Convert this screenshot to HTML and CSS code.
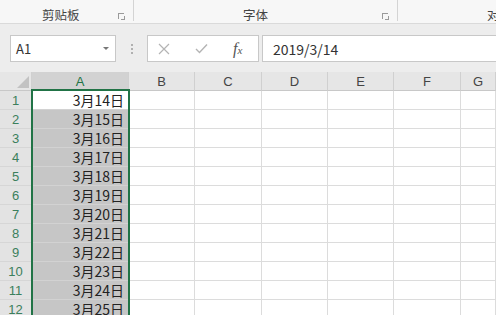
FILE: index.html
```html
<!DOCTYPE html>
<html>

<head>
    <meta charset="utf-8">
    <link rel="stylesheet" href="styles.css">
</head>

<body>

    <div class="ribbon">
        <div class="group group-clip">
            <span class="group-label">剪贴板</span>
            <span class="launcher"></span>
        </div>
        <div class="group group-font">
            <span class="group-label">字体</span>
            <span class="launcher"></span>
        </div>
        <div class="group group-align">
            <span class="group-label">对齐方式</span>
        </div>
    </div>

    <div class="formula-bar">
        <div class="name-box">
            <span>A1</span>
            <span class="caret"></span>
        </div>
        <div class="grip"><i></i><i></i><i></i></div>
        <div class="fx-buttons">
            <svg width="12" height="12" viewBox="0 0 12 12">
                <path d="M1 1 L11 11 M11 1 L1 11" stroke="#b4b4b4" stroke-width="1.2" fill="none" />
            </svg>
            <svg width="13" height="11" viewBox="0 0 13 11">
                <path d="M1 6 L4.5 9.5 L12 1.5" stroke="#b4b4b4" stroke-width="1.4" fill="none" />
            </svg>
            <span class="fx">f<sub>x</sub></span>
        </div>
        <div class="formula-input">2019/3/14</div>
    </div>

    <div class="sheet">
        <div class="grid">
            <div class="corner"><span class="corner-mark"></span></div>
            <div class="col-head selected">A</div>
            <div class="col-head">B</div>
            <div class="col-head">C</div>
            <div class="col-head">D</div>
            <div class="col-head">E</div>
            <div class="col-head">F</div>
            <div class="col-head">G</div>

            <div class="row-head">1</div><div class="cell a active">3月14日</div><div class="cell"></div><div class="cell"></div><div class="cell"></div><div class="cell"></div><div class="cell"></div><div class="cell"></div>
            <div class="row-head">2</div><div class="cell a">3月15日</div><div class="cell"></div><div class="cell"></div><div class="cell"></div><div class="cell"></div><div class="cell"></div><div class="cell"></div>
            <div class="row-head">3</div><div class="cell a">3月16日</div><div class="cell"></div><div class="cell"></div><div class="cell"></div><div class="cell"></div><div class="cell"></div><div class="cell"></div>
            <div class="row-head">4</div><div class="cell a">3月17日</div><div class="cell"></div><div class="cell"></div><div class="cell"></div><div class="cell"></div><div class="cell"></div><div class="cell"></div>
            <div class="row-head">5</div><div class="cell a">3月18日</div><div class="cell"></div><div class="cell"></div><div class="cell"></div><div class="cell"></div><div class="cell"></div><div class="cell"></div>
            <div class="row-head">6</div><div class="cell a">3月19日</div><div class="cell"></div><div class="cell"></div><div class="cell"></div><div class="cell"></div><div class="cell"></div><div class="cell"></div>
            <div class="row-head">7</div><div class="cell a">3月20日</div><div class="cell"></div><div class="cell"></div><div class="cell"></div><div class="cell"></div><div class="cell"></div><div class="cell"></div>
            <div class="row-head">8</div><div class="cell a">3月21日</div><div class="cell"></div><div class="cell"></div><div class="cell"></div><div class="cell"></div><div class="cell"></div><div class="cell"></div>
            <div class="row-head">9</div><div class="cell a">3月22日</div><div class="cell"></div><div class="cell"></div><div class="cell"></div><div class="cell"></div><div class="cell"></div><div class="cell"></div>
            <div class="row-head">10</div><div class="cell a">3月23日</div><div class="cell"></div><div class="cell"></div><div class="cell"></div><div class="cell"></div><div class="cell"></div><div class="cell"></div>
            <div class="row-head">11</div><div class="cell a">3月24日</div><div class="cell"></div><div class="cell"></div><div class="cell"></div><div class="cell"></div><div class="cell"></div><div class="cell"></div>
            <div class="row-head">12</div><div class="cell a">3月25日</div><div class="cell"></div><div class="cell"></div><div class="cell"></div><div class="cell"></div><div class="cell"></div><div class="cell"></div>
        </div>
        <!-- green outline of the selected column -->
        <div class="selection"></div>
    </div>

</body>

</html>
```

FILE: styles.css
```css
body {
    margin: 0;
    width: 496px;
    height: 315px;
    overflow: hidden;
    background-color: #ffffff;
    font-family: "Noto Sans CJK SC", "Noto Sans", sans-serif;
    color: #333333;
}

/* ribbon group labels */

.ribbon {
    height: 23px;
    background-color: #f7f7f7;
    border-bottom: 1px solid #dadada;
    display: flex;
    overflow: hidden;
}

.group {
    height: 21px;
    position: relative;
    border-right: 1px solid #d4d4d4;
    box-sizing: border-box;
}

.group-clip {
    width: 134px;
}

.group-font {
    width: 264px;
}

.group-align {
    flex: 1;
    border-right: none;
    overflow: hidden;
}

.group-label {
    position: absolute;
    top: 7px;
    font-size: 12.5px;
    line-height: 16px;
    color: #444444;
    white-space: nowrap;
}

.group-clip .group-label {
    left: 42px;
}

.group-font .group-label {
    left: 109px;
}

.group-align .group-label {
    left: 89px;
}

.launcher {
    position: absolute;
    right: 9px;
    top: 13px;
    width: 5px;
    height: 5px;
    border-left: 1px solid #9a9a9a;
    border-top: 1px solid #9a9a9a;
}

.launcher::after {
    content: "";
    position: absolute;
    left: 2px;
    top: 2px;
    width: 3px;
    height: 3px;
    border-right: 1px solid #9a9a9a;
    border-bottom: 1px solid #9a9a9a;
}

/* formula bar */

.formula-bar {
    height: 48px;
    background-color: #ededed;
    box-sizing: border-box;
    padding: 11px 0 10px 10px;
    display: flex;
    align-items: stretch;
}

.name-box {
    width: 106px;
    background-color: #ffffff;
    border: 1px solid #c8c8c8;
    box-sizing: border-box;
    display: flex;
    align-items: center;
    justify-content: space-between;
    padding: 0 6px 0 5px;
    font-size: 13px;
}

.caret {
    width: 0;
    height: 0;
    border-left: 3px solid transparent;
    border-right: 3px solid transparent;
    border-top: 3px solid #777777;
}

.grip {
    width: 31px;
    display: flex;
    flex-direction: column;
    align-items: center;
    justify-content: center;
    gap: 2px;
}

.grip i {
    display: block;
    width: 2px;
    height: 2px;
    background-color: #b0b0b0;
}

.fx-buttons {
    width: 112px;
    background-color: #ffffff;
    border: 1px solid #c8c8c8;
    box-sizing: border-box;
    display: flex;
    align-items: center;
    padding-left: 10px;
    gap: 25px;
}

.fx {
    font-family: "Liberation Serif", serif;
    font-style: italic;
    font-size: 16px;
    color: #555555;
    line-height: 1;
}

.fx sub {
    font-size: 11px;
    vertical-align: baseline;
}

.formula-input {
    flex: 1;
    margin-left: 3px;
    background-color: #ffffff;
    border: 1px solid #c8c8c8;
    border-right: none;
    box-sizing: border-box;
    display: flex;
    align-items: center;
    padding-left: 10px;
    font-size: 14px;
    color: #333333;
}

/* sheet grid */

.sheet {
    position: relative;
}

.grid {
    display: grid;
    grid-template-columns: 32px 97px 66px 67px 66px 66px 67px 1fr;
    grid-auto-rows: 19px;
}

.corner,
.col-head,
.row-head {
    background-color: #e6e6e6;
    border-right: 1px solid #d0d0d0;
    border-bottom: 1px solid #c8c8c8;
    box-sizing: border-box;
}

.corner {
    position: relative;
}

.corner-mark {
    position: absolute;
    right: 2px;
    bottom: 2px;
    width: 0;
    height: 0;
    border-left: 12px solid transparent;
    border-bottom: 12px solid #c2c2c2;
}

.col-head {
    font-family: "Liberation Sans", sans-serif;
    font-size: 13px;
    line-height: 19px;
    text-align: center;
    color: #444444;
}

.col-head.selected {
    background-color: #d2d2d2;
    color: #217346;
    border-bottom: 1px solid #217346;
}

.row-head {
    font-family: "Liberation Sans", sans-serif;
    font-size: 13px;
    line-height: 19px;
    text-align: center;
    color: #3b7f5c;
    background-color: #e3e3e3;
    border-bottom: 1px solid #d6d6d6;
}

.cell {
    border-right: 1px solid #dcdcdc;
    border-bottom: 1px solid #dcdcdc;
    box-sizing: border-box;
    font-size: 14px;
    line-height: 18px;
    text-align: right;
    padding-right: 4px;
    color: #222222;
}

.cell.a {
    background-color: #c6c6c6;
    border-bottom-color: #d2d2d2;
}

.cell.a.active {
    background-color: #ffffff;
}

.selection {
    position: absolute;
    left: 31px;
    top: 17px;
    width: 99px;
    height: 260px;
    border: 2px solid #217346;
    box-sizing: border-box;
}
```
